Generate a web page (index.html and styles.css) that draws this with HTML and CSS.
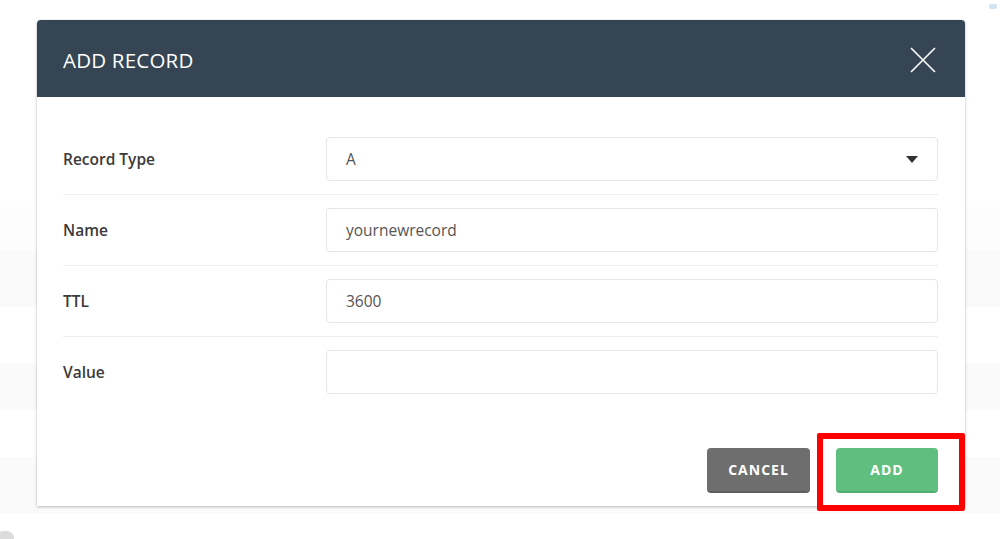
FILE: index.html
```html
<!DOCTYPE html>
<html>
<head>
<meta charset="utf-8">
<link rel="stylesheet" href="styles.css">
</head>
<body>
<div class="page">
  <div class="bg-rows">
    <div class="bg-row h207 white"></div>
    <div class="bg-row h43 faint"></div>
    <div class="bg-row h57 grey"></div>
    <div class="bg-row h56 white"></div>
    <div class="bg-row h47 grey"></div>
    <div class="bg-row h47 white"></div>
    <div class="bg-row h56 grey"></div>
  </div>
  <div class="blob"></div>
  <div class="dot"></div>

  <div class="modal">
    <div class="modal-header">
      <h2 class="modal-title">ADD RECORD</h2>
      <svg class="close" width="26" height="26" viewBox="0 0 26 26">
        <path d="M1 1 L25 25 M25 1 L1 25" stroke="#ffffff" stroke-width="1.6" fill="none"/>
      </svg>
    </div>
    <div class="modal-body">
      <div class="row">
        <div class="label">Record Type</div>
        <div class="field select">
          <span>A</span>
          <svg class="caret" width="12" height="7" viewBox="0 0 12 7"><path d="M0 0 L12 0 L6 7 Z" fill="#333"/></svg>
        </div>
      </div>
      <div class="row">
        <div class="label">Name</div>
        <div class="field"><span>yournewrecord</span></div>
      </div>
      <div class="row">
        <div class="label">TTL</div>
        <div class="field"><span>3600</span></div>
      </div>
      <div class="row last">
        <div class="label">Value</div>
        <div class="field"></div>
      </div>
    </div>
    <div class="modal-footer">
      <button class="btn btn-cancel">CANCEL</button>
      <button class="btn btn-add">ADD</button>
    </div>
  </div>
  <div class="highlight"></div>
</div>
</body>
</html>
```
FILE: styles.css
```css
* { box-sizing: border-box; }
html, body { margin: 0; padding: 0; }
body {
  background: #ffffff;
  font-family: "Open Sans", "Liberation Sans", sans-serif;
  width: 1000px;
  height: 539px;
  overflow: hidden;
}
.page { position: relative; width: 1000px; height: 539px; }
.bg-rows { display: flex; flex-direction: column; }
.bg-row.white { background: #ffffff; }
.bg-row.faint { background: #fdfdfd; }
.bg-row.grey { background: #fafafa; }
.h207 { height: 207px; }
.h43 { height: 43px; }
.h57 { height: 57px; }
.h56 { height: 56px; }
.h47 { height: 47px; }
.blob {
  position: absolute; left: -4px; top: 531px; width: 18px; height: 14px;
  border-radius: 8px; background: #dcdcdc;
}
.dot {
  position: absolute; left: 989px; top: 4px; width: 8px; height: 5px;
  border-radius: 2px; background: #d3e3f2;
}
.modal {
  position: absolute;
  left: 37px; top: 20px;
  width: 928px; height: 486px;
  background: #ffffff;
  border-radius: 4px 4px 0 0;
  box-shadow: 0 1px 3px rgba(0,0,0,0.25), 0 0 1px rgba(0,0,0,0.2);
  display: flex; flex-direction: column;
}
.modal-header {
  height: 77px;
  background: #354553;
  border-radius: 4px 4px 0 0;
  display: flex; align-items: center; justify-content: space-between;
  padding: 0 29px 0 26px;
}
.modal-title {
  margin: 0;
  color: #ffffff;
  font-size: 20.5px;
  font-weight: 500;
  letter-spacing: 0.2px;
  position: relative; top: 1px;
}
.close { display: block; position: relative; top: 1px; }
.modal-body { padding: 27px 27px 0 26px; }
.row {
  display: flex; align-items: center;
  padding: 13px 0 13px;
  border-bottom: 1px solid #eeeeee;
}
.row.last { border-bottom: none; }
.label {
  width: 263px;
  font-size: 15.5px;
  font-weight: 600;
  color: #3a3a3a;
}
.field {
  flex: 1;
  height: 44px;
  border: 1px solid #e6e6e6;
  border-radius: 4px;
  display: flex; align-items: center; justify-content: space-between;
  padding: 0 20px 0 19px;
  font-size: 15.5px;
  color: #555555;
}
.caret { display: block; margin-right: -1px; }
.modal-footer {
  margin-top: auto;
  display: flex; justify-content: flex-end; gap: 26px;
  padding: 0 27px 13px 0;
}
.btn {
  height: 45px;
  border: none;
  border-radius: 4px;
  color: #ffffff;
  font-family: "Open Sans", "Liberation Sans", sans-serif;
  font-size: 14px;
  font-weight: 700;
  letter-spacing: 1px;
  padding: 0;
}
.btn-cancel {
  width: 103px;
  background: #6e6e6e;
  border-bottom: 2px solid #5e5e5e;
}
.btn-add {
  width: 102px;
  background: #5fbf7f;
  border-bottom: 2px solid #52ad70;
}
.highlight {
  position: absolute;
  left: 817px; top: 433px;
  width: 148px; height: 78px;
  border: 6px solid #ff0000;
  border-radius: 2px;
}
```
